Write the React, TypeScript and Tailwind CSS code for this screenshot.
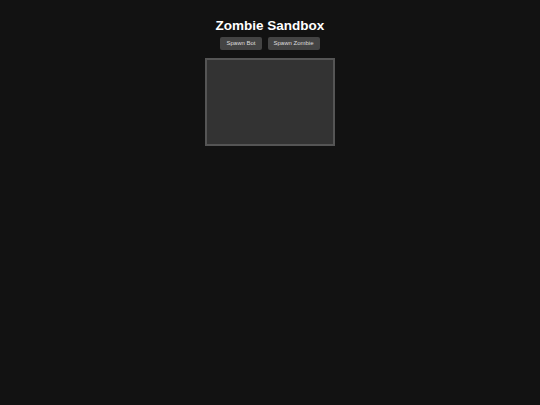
import React from 'react';

export default function App() {
  return (
    <div className="min-h-[405px] w-full bg-[#121212] text-white flex flex-col items-center pt-[17px] font-['Liberation_Sans',Arial,sans-serif]">
      <h1 className="text-[13.5px] leading-[17px] font-bold">Zombie Sandbox</h1>
      <div className="flex gap-[6px] mt-[3px]">
        <button className="h-[13px] px-[6px] bg-[#444] rounded-[2px] text-[6px] leading-[13px] text-[#ddd]">Spawn Bot</button>
        <button className="h-[13px] px-[6px] bg-[#444] rounded-[2px] text-[6px] leading-[13px] text-[#ddd]">Spawn Zombie</button>
      </div>
      <div className="mt-[8px] w-[130px] h-[88px] bg-[#333] border-2 border-[#555]" />
    </div>
  );
}
